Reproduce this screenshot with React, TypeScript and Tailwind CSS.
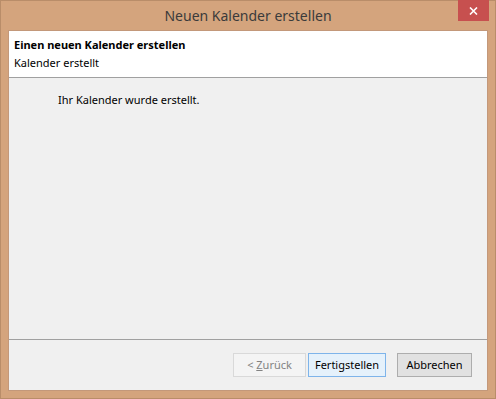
export default function App() {
  return (
    <div
      className="w-[496px] h-[399px] bg-[#d4a47d] border border-[#b98d69] flex flex-col"
      style={{ fontFamily: '"Noto Sans", "Open Sans", sans-serif' }}
    >
      <div className="h-[29px] shrink-0 flex items-start relative">
        <div className="flex-1 text-center text-[14px] leading-[29px] text-[#3b3b3b]">
          Neuen Kalender erstellen
        </div>
        <div className="absolute right-[6px] top-[-1px] w-[31px] h-[21px] bg-[#c7504f] flex items-center justify-center">
          <svg width="9" height="8" viewBox="0 0 9 8">
            <path d="M1 0.5 L8 7.5 M8 0.5 L1 7.5" stroke="#fff" strokeWidth="1.6" />
          </svg>
        </div>
      </div>
      <div className="flex-1 mx-[7px] mb-[7px] border border-[#c3987a] flex flex-col bg-[#f0f0f0]">
        <div className="h-[47px] bg-white border-b border-[#a0a0a0] px-[5px] pt-[5px] text-[11px] text-black leading-[18px]">
          <div className="font-bold">Einen neuen Kalender erstellen</div>
          <div>Kalender erstellt</div>
        </div>
        <div className="flex-1 pl-[49px] pt-[13px] text-[11px] leading-[18px] text-black">
          Ihr Kalender wurde erstellt.
        </div>
        <div className="h-[51px] border-t border-[#a0a0a0] flex items-start justify-end pt-[13px] pr-[15px] text-[11px]">
          <button className="w-[73px] h-[24px] border border-[#d9d9d9] bg-[#f4f4f4] text-[#838383]">
            &lt; <span className="underline">Z</span>urück
          </button>
          <button className="ml-[2px] w-[78px] h-[24px] border border-[#7eb4ea] bg-[#e5f1fb] text-black">
            Fertigstellen
          </button>
          <button className="ml-[11px] w-[75px] h-[24px] border border-[#adadad] bg-[#e1e1e1] text-black">
            Abbrechen
          </button>
        </div>
      </div>
    </div>
  );
}
